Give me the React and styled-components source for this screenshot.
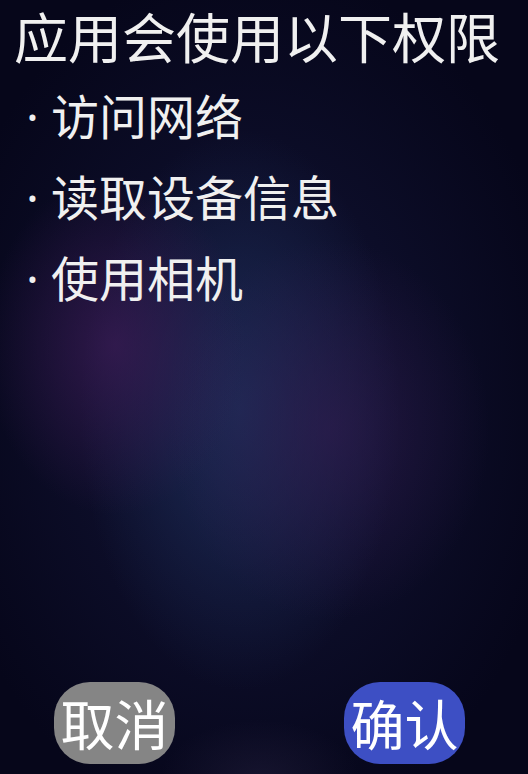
import styled, { createGlobalStyle } from "styled-components";

const Global = createGlobalStyle`
  html, body {
    margin: 0;
    padding: 0;
    background: #06061a;
  }
  body {
    font-family: "Noto Sans CJK SC", "Noto Sans", sans-serif;
  }
`

const Screen = styled.div`
  width: 528px;
  height: 774px;
  box-sizing: border-box;
  display: flex;
  flex-direction: column;
  align-items: flex-start;
  color: #f0f0f0;
  background:
    radial-gradient(ellipse 130px 170px at 115px 345px, rgba(62, 28, 88, 0.7), transparent),
    radial-gradient(ellipse 160px 190px at 330px 430px, rgba(50, 28, 80, 0.6), transparent),
    radial-gradient(ellipse 160px 280px at 240px 410px, rgba(30, 48, 92, 0.8), transparent),
    radial-gradient(ellipse 100px 60px at 260px 780px, rgba(36, 32, 62, 0.5), transparent),
    radial-gradient(ellipse 320px 440px at 250px 400px, #131538, #06061a);
`

const Title = styled.h1`
  margin: 1px 0 0 14px;
  font-size: 54px;
  font-weight: 400;
  line-height: 70px;
  white-space: nowrap;
`

const List = styled.ul`
  list-style: none;
  margin: 4px 0 0 0;
  padding: 0 0 0 26px;
`

const Item = styled.li`
  font-size: 48px;
  line-height: 78px;
  white-space: nowrap;
`

const Dot = styled.span`
  font-family: "Noto Sans", sans-serif;
  margin-right: 12px;
`

const Actions = styled.div`
  margin-top: auto;
  align-self: stretch;
  display: flex;
  justify-content: space-between;
  padding: 0 63px 10px 54px;
`

const Button = styled.button`
  width: 121px;
  height: 82px;
  border: none;
  border-radius: 36px;
  padding: 0;
  background: ${(p) => (p.$primary ? "#3d4fc4" : "#858585")};
  color: #ffffff;
  font-family: inherit;
  font-size: 54px;
  line-height: 1;
  display: flex;
  align-items: center;
  justify-content: center;
  white-space: nowrap;
  overflow: visible;
`

const permissions = ["访问网络", "读取设备信息", "使用相机"];

const App = () => {
  return (
    <>
      <Global />
      <Screen>
        <Title>应用会使用以下权限</Title>
        <List>
          {permissions.map((p) => (
            <Item key={p}><Dot>·</Dot>{p}</Item>
          ))}
        </List>
        <Actions>
          <Button>取消</Button>
          <Button $primary>确认</Button>
        </Actions>
      </Screen>
    </>
  );
}

export default App;
